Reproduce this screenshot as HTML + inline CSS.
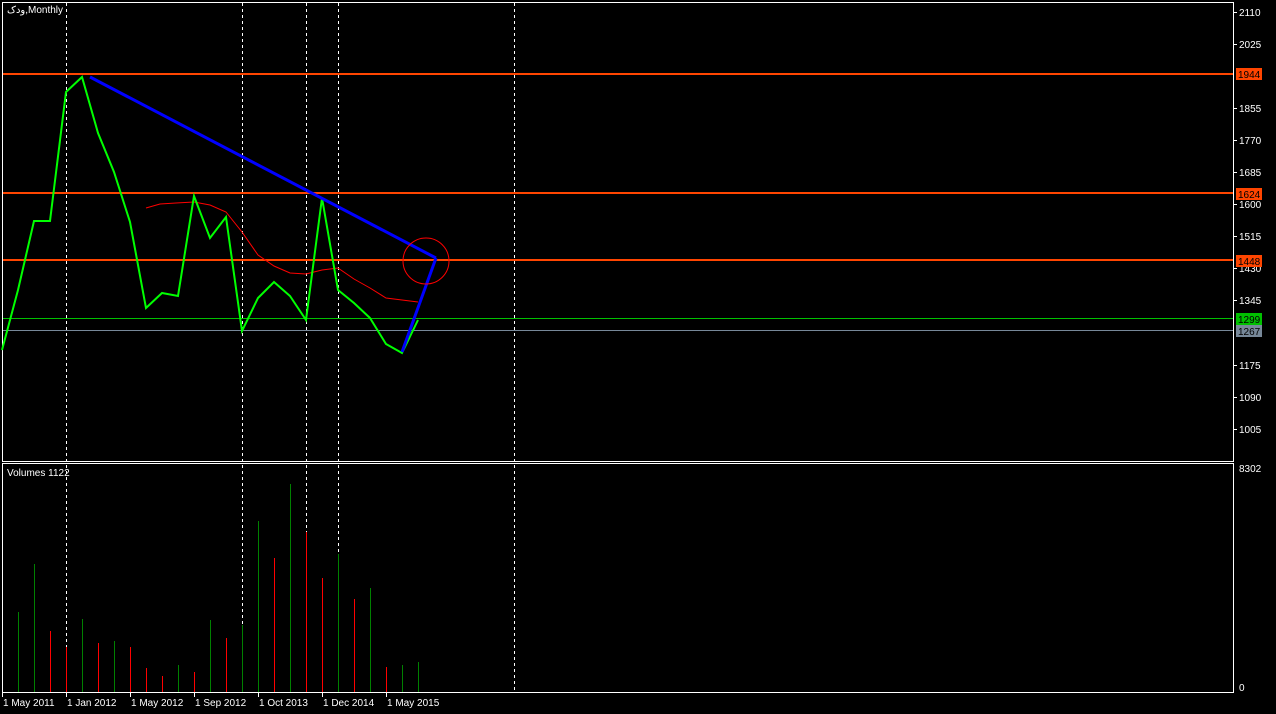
<!DOCTYPE html>
<html><head><meta charset="utf-8"><style>
html,body{margin:0;padding:0;background:#000;width:1276px;height:714px;overflow:hidden}
svg{display:block}
text{font-family:"Liberation Sans","DejaVu Sans",sans-serif;font-size:10px;fill:#fff}
</style></head><body>
<svg width="1276" height="714" viewBox="0 0 1276 714">
<rect width="1276" height="714" fill="#000"/>
<!-- panel borders -->
<rect x="2.5" y="2.5" width="1231" height="459" fill="none" stroke="#fff"/>
<rect x="2.5" y="463.5" width="1231" height="229" fill="none" stroke="#fff"/>
<!-- dashed verticals -->
<g stroke="#fff" stroke-dasharray="3,3">
<line x1="66.5" y1="3" x2="66.5" y2="692"/>
<line x1="242.5" y1="3" x2="242.5" y2="692"/>
<line x1="306.5" y1="3" x2="306.5" y2="692"/>
<line x1="338.5" y1="3" x2="338.5" y2="692"/>
<line x1="514.5" y1="3" x2="514.5" y2="692"/>
</g>
<!-- horizontal levels -->
<g stroke-width="2">
<line x1="3" y1="74" x2="1233" y2="74" stroke="#ff4500"/>
<line x1="3" y1="193" x2="1233" y2="193" stroke="#ff4500"/>
<line x1="3" y1="260" x2="1233" y2="260" stroke="#ff4500"/>
</g>
<line x1="3" y1="318.5" x2="1233" y2="318.5" stroke="#00c000"/>
<line x1="3" y1="330.5" x2="1233" y2="330.5" stroke="#778899"/>
<!-- red MA -->
<polyline fill="none" stroke="#ff0000" stroke-width="1" points="146,208 160,204 176,203 194,202 210,205 226,212 242,232 258,255 274,266 290,273 306,274 322,270 338,268 354,279 370,288 386,298 402,300 418,302"/>
<!-- green price -->
<polyline fill="none" stroke="#00ff00" stroke-width="2" points="2,350 18,290 34,221 50,221 66,92 82,77 98,133 114,172 130,222 146,308 162,293 178,296 194,196 210,238 226,217 242,331 258,298 274,282 290,296 306,320 322,198 338,290 354,303 370,318 386,344 402,353 418,320"/>
<!-- blue trend lines -->
<line x1="90" y1="77" x2="436" y2="258" stroke="#0000ff" stroke-width="3"/>
<line x1="402" y1="352" x2="436" y2="258" stroke="#0000ff" stroke-width="3"/>
<circle cx="426" cy="261" r="23" fill="none" stroke="#ff0000"/>
<text x="7" y="13">ودک,Monthly</text>
<text x="7" y="476">Volumes 1122</text>
<!-- volume bars -->
<g stroke-width="1">
<line x1="18.5" y1="612" x2="18.5" y2="692" stroke="#008000"/>
<line x1="34.5" y1="564" x2="34.5" y2="692" stroke="#008000"/>
<line x1="50.5" y1="631" x2="50.5" y2="692" stroke="#ff0000"/>
<line x1="66.5" y1="647" x2="66.5" y2="692" stroke="#ff0000"/>
<line x1="82.5" y1="619" x2="82.5" y2="692" stroke="#008000"/>
<line x1="98.5" y1="643" x2="98.5" y2="692" stroke="#ff0000"/>
<line x1="114.5" y1="641" x2="114.5" y2="692" stroke="#008000"/>
<line x1="130.5" y1="647" x2="130.5" y2="692" stroke="#ff0000"/>
<line x1="146.5" y1="668" x2="146.5" y2="692" stroke="#ff0000"/>
<line x1="162.5" y1="676" x2="162.5" y2="692" stroke="#ff0000"/>
<line x1="178.5" y1="665" x2="178.5" y2="692" stroke="#008000"/>
<line x1="194.5" y1="672" x2="194.5" y2="692" stroke="#ff0000"/>
<line x1="210.5" y1="620" x2="210.5" y2="692" stroke="#008000"/>
<line x1="226.5" y1="638" x2="226.5" y2="692" stroke="#ff0000"/>
<line x1="242.5" y1="625" x2="242.5" y2="692" stroke="#008000"/>
<line x1="258.5" y1="521" x2="258.5" y2="692" stroke="#008000"/>
<line x1="274.5" y1="558" x2="274.5" y2="692" stroke="#ff0000"/>
<line x1="290.5" y1="484" x2="290.5" y2="692" stroke="#008000"/>
<line x1="306.5" y1="532" x2="306.5" y2="692" stroke="#ff0000"/>
<line x1="322.5" y1="578" x2="322.5" y2="692" stroke="#ff0000"/>
<line x1="338.5" y1="554" x2="338.5" y2="692" stroke="#008000"/>
<line x1="354.5" y1="599" x2="354.5" y2="692" stroke="#ff0000"/>
<line x1="370.5" y1="588" x2="370.5" y2="692" stroke="#008000"/>
<line x1="386.5" y1="667" x2="386.5" y2="692" stroke="#ff0000"/>
<line x1="402.5" y1="665" x2="402.5" y2="692" stroke="#008000"/>
<line x1="418.5" y1="662" x2="418.5" y2="692" stroke="#008000"/>
</g>
<!-- price axis -->
<g stroke="#fff">
<line x1="1233" y1="12.5" x2="1237" y2="12.5"/><line x1="1233" y1="44.5" x2="1237" y2="44.5"/>
<line x1="1233" y1="108.5" x2="1237" y2="108.5"/><line x1="1233" y1="140.5" x2="1237" y2="140.5"/>
<line x1="1233" y1="172.5" x2="1237" y2="172.5"/><line x1="1233" y1="204.5" x2="1237" y2="204.5"/>
<line x1="1233" y1="236.5" x2="1237" y2="236.5"/><line x1="1233" y1="268.5" x2="1237" y2="268.5"/>
<line x1="1233" y1="300.5" x2="1237" y2="300.5"/><line x1="1233" y1="365.5" x2="1237" y2="365.5"/>
<line x1="1233" y1="397.5" x2="1237" y2="397.5"/><line x1="1233" y1="429.5" x2="1237" y2="429.5"/>
</g>
<g>
<text x="1239" y="16">2110</text><text x="1239" y="48">2025</text>
<text x="1239" y="112">1855</text><text x="1239" y="144">1770</text>
<text x="1239" y="176">1685</text><text x="1239" y="208">1600</text>
<text x="1239" y="240">1515</text><text x="1239" y="272">1430</text>
<text x="1239" y="304">1345</text><text x="1239" y="369">1175</text>
<text x="1239" y="401">1090</text><text x="1239" y="433">1005</text>
<text x="1239" y="472">8302</text><text x="1239" y="691">0</text>
</g>
<rect x="1236" y="68" width="26" height="12" fill="#ff4500"/><text x="1238" y="78" style="fill:#000">1944</text>
<rect x="1236" y="188" width="26" height="12" fill="#ff4500"/><text x="1238" y="198" style="fill:#000">1624</text>
<rect x="1236" y="255" width="26" height="12" fill="#ff4500"/><text x="1238" y="265" style="fill:#000">1448</text>
<rect x="1236" y="313" width="26" height="12" fill="#00c000"/><text x="1238" y="323" style="fill:#000">1299</text>
<rect x="1236" y="325" width="26" height="12" fill="#778899"/><text x="1238" y="335" style="fill:#000">1267</text>
<!-- time axis -->
<g stroke="#fff">
<line x1="2.5" y1="692" x2="2.5" y2="697"/><line x1="66.5" y1="692" x2="66.5" y2="697"/>
<line x1="130.5" y1="692" x2="130.5" y2="697"/><line x1="194.5" y1="692" x2="194.5" y2="697"/>
<line x1="258.5" y1="692" x2="258.5" y2="697"/><line x1="322.5" y1="692" x2="322.5" y2="697"/>
<line x1="386.5" y1="692" x2="386.5" y2="697"/>
</g>
<text x="3" y="706">1 May 2011</text><text x="67" y="706">1 Jan 2012</text>
<text x="131" y="706">1 May 2012</text><text x="195" y="706">1 Sep 2012</text>
<text x="259" y="706">1 Oct 2013</text><text x="323" y="706">1 Dec 2014</text>
<text x="387" y="706">1 May 2015</text>
</svg>
</body></html>
